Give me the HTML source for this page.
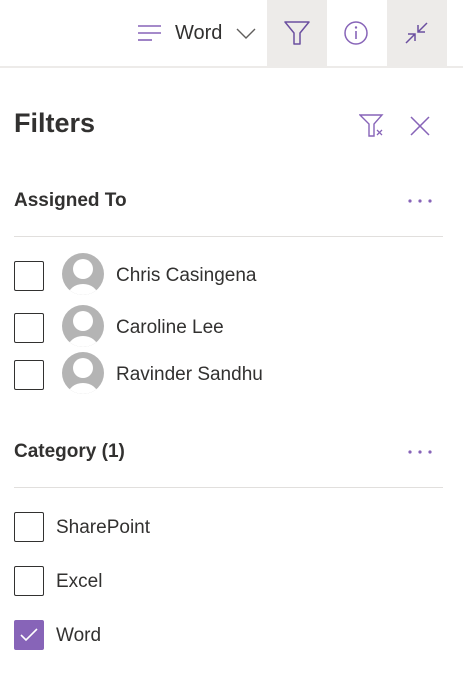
<!DOCTYPE html><html><head><style>
body{margin:0;width:463px;height:681px;background:#fff;font-family:"Liberation Sans",sans-serif;color:#323130;position:relative;overflow:hidden}
.a{position:absolute}
.cb{position:absolute;left:14px;width:28px;height:28px;border:1px solid #323130;border-radius:2px}
.t{position:absolute;font-size:19px}
.av{position:absolute;left:62px;width:42px;height:42px}
</style></head><body>
<svg width="0" height="0" style="position:absolute"><defs><clipPath id="c"><circle cx="21" cy="21" r="21"/></clipPath><g id="p" clip-path="url(#c)"><rect width="42" height="42" fill="#b4b4b4"/><circle cx="21" cy="16" r="10" fill="#fff"/><ellipse cx="21" cy="43" rx="15" ry="12" fill="#fff"/></g></defs></svg>
<div class="a" style="left:0;top:66px;width:463px;height:2px;background:#edebe9"></div>
<svg class="a" style="left:137px;top:24px" width="26" height="18"><g stroke="#8764b8" stroke-width="1.6"><line x1="1" y1="2" x2="24" y2="2"/><line x1="1" y1="9" x2="24" y2="9"/><line x1="1" y1="16" x2="15" y2="16"/></g></svg>
<div class="t" style="left:175px;top:22px;font-size:20px">Word</div>
<svg class="a" style="left:236px;top:28px" width="20" height="12"><path d="M1 1 L10 10 L19 1" fill="none" stroke="#605e5c" stroke-width="1.4"/></svg>
<div class="a" style="left:267px;top:0;width:60px;height:66px;background:#edebe9"></div>
<svg class="a" style="left:284px;top:21px" width="26" height="24"><path d="M1 1 H25 L16 12 V23 H10 V12 Z" fill="none" stroke="#6b4fa0" stroke-width="1.5" stroke-linejoin="round"/></svg>
<svg class="a" style="left:343px;top:20px" width="26" height="26"><circle cx="13" cy="13" r="11" fill="none" stroke="#8764b8" stroke-width="1.5"/><line x1="13" y1="11" x2="13" y2="19" stroke="#8764b8" stroke-width="1.6"/><circle cx="13" cy="7.5" r="1.2" fill="#8764b8"/></svg>
<div class="a" style="left:387px;top:0;width:60px;height:66px;background:#edebe9"></div>
<svg class="a" style="left:404px;top:21px" width="26" height="24"><g stroke="#6b4fa0" stroke-width="1.5" fill="none"><path d="M23 2 L14 11 M14 4 V11 H21"/><path d="M2 22 L11 13 M4 13 H11 V20"/></g></svg>
<div class="t" style="left:14px;top:108px;font-size:27px;font-weight:bold">Filters</div>
<svg class="a" style="left:359px;top:114px" width="26" height="24"><path d="M1 1 H23 L15 10 V22 H10 V10 Z" fill="none" stroke="#8764b8" stroke-width="1.4"/><path d="M18 16 L23 21 M23 16 L18 21" stroke="#8764b8" stroke-width="1.3"/></svg>
<svg class="a" style="left:409px;top:115px" width="22" height="22"><path d="M2 2 L20 20 M20 2 L2 20" stroke="#8764b8" stroke-width="1.5"/></svg>
<div class="t" style="left:14px;top:190px;font-size:19px;font-weight:bold">Assigned To</div>
<svg class="a" style="left:406px;top:198px" width="28" height="6"><g fill="#8764b8"><circle cx="4" cy="3" r="1.6"/><circle cx="14" cy="3" r="1.6"/><circle cx="24" cy="3" r="1.6"/></g></svg>
<div class="a" style="left:14px;top:236px;width:429px;height:1px;background:#e1dfdd"></div>
<div class="cb" style="top:261px"></div><svg class="av" style="top:253px" viewBox="0 0 42 42"><use href="#p"/></svg><div class="t" style="left:116px;top:265px">Chris Casingena</div>
<div class="cb" style="top:313px"></div><svg class="av" style="top:305px" viewBox="0 0 42 42"><use href="#p"/></svg><div class="t" style="left:116px;top:317px">Caroline Lee</div>
<div class="cb" style="top:360px"></div><svg class="av" style="top:352px" viewBox="0 0 42 42"><use href="#p"/></svg><div class="t" style="left:116px;top:364px">Ravinder Sandhu</div>
<div class="t" style="left:14px;top:441px;font-size:19px;font-weight:bold">Category (1)</div>
<svg class="a" style="left:406px;top:449px" width="28" height="6"><g fill="#8764b8"><circle cx="4" cy="3" r="1.6"/><circle cx="14" cy="3" r="1.6"/><circle cx="24" cy="3" r="1.6"/></g></svg>
<div class="a" style="left:14px;top:487px;width:429px;height:1px;background:#e1dfdd"></div>
<div class="cb" style="top:512px"></div><div class="t" style="left:56px;top:517px">SharePoint</div>
<div class="cb" style="top:566px"></div><div class="t" style="left:56px;top:571px">Excel</div>
<div class="cb" style="top:620px;background:#8764b8;border-color:#8764b8"></div>
<svg class="a" style="left:19px;top:627px" width="20" height="16"><path d="M2 8 L7 13 L18 2" fill="none" stroke="#fff" stroke-width="1.6"/></svg>
<div class="t" style="left:56px;top:625px">Word</div>
</body></html>
